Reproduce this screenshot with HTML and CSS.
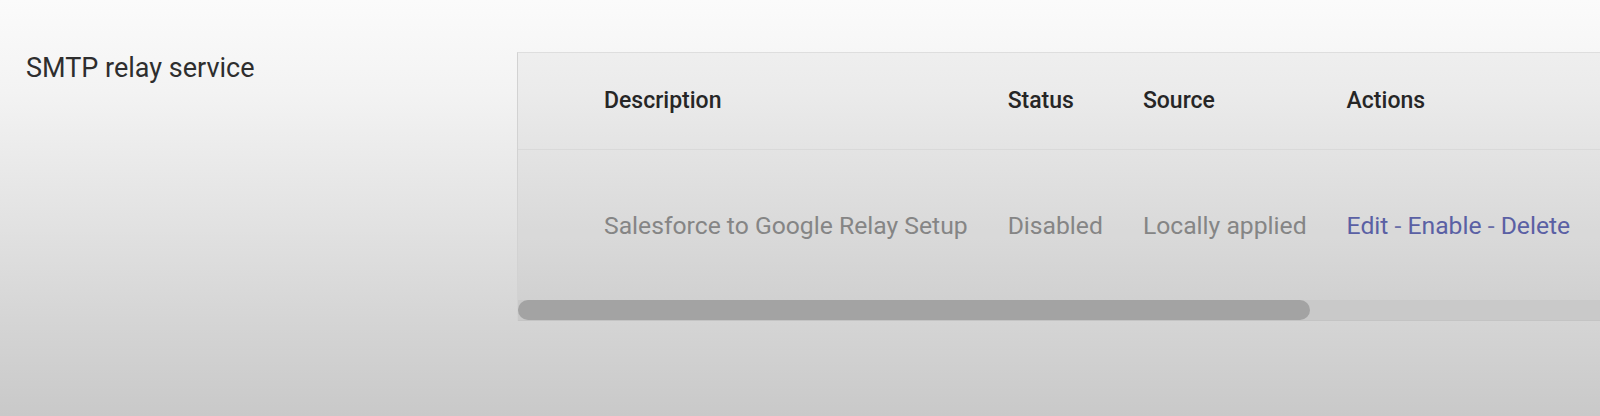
FILE: index.html
```html
<!DOCTYPE html>
<html lang="en">
<head>
    <meta charset="UTF-8">
    <meta name="viewport" content="width=device-width, initial-scale=1.0">
    <title>SMTP relay service</title>
    <link rel="stylesheet" href="styles.css">
</head>
<body>
    <div class="setting-row">
        <!-- Setting name on the left -->
        <div class="setting-label">SMTP relay service</div>

        <!-- Relay rules table -->
        <div class="relay-table">
            <table>
                <thead>
                    <tr>
                        <th class="spacer"></th>
                        <th>Description</th>
                        <th>Status</th>
                        <th>Source</th>
                        <th>Actions</th>
                        <th class="fill"></th>
                    </tr>
                </thead>
                <tbody>
                    <tr>
                        <td class="spacer"></td>
                        <td>Salesforce to Google Relay Setup</td>
                        <td>Disabled</td>
                        <td>Locally applied</td>
                        <td class="actions"><a href="#">Edit</a> - <a href="#">Enable</a> - <a href="#">Delete</a></td>
                        <td class="fill"></td>
                    </tr>
                </tbody>
            </table>
            <div class="scroll-track"><div class="scroll-thumb"></div></div>
        </div>
    </div>
</body>
</html>
```

FILE: styles.css
```css
html, body {
    height: 100%;
}
body {
    margin: 0;
    overflow: hidden;
    font-family: Roboto, "Liberation Sans", Arial, sans-serif;
    background: linear-gradient(#fbfbfb 0%, #f3f3f3 22%, #e4e4e4 50%, #d6d6d6 75%, #c9c9c9 100%);
}
.setting-row {
    display: flex;
    padding-top: 52px;
}
.setting-label {
    flex-shrink: 0;
    width: 491px;
    padding-left: 26px;
    font-size: 27px;
    line-height: 32px;
    color: #2e2e2e;
}
.relay-table {
    flex-shrink: 0;
    width: 1400px;
    border-left: 1px solid #d2d2d2;
    border-top: 1px solid #dedede;
    background-color: rgba(0, 0, 0, 0.03);
}
table {
    border-collapse: collapse;
    white-space: nowrap;
}
th, td {
    padding: 0 20px;
    text-align: left;
    vertical-align: middle;
}
th {
    height: 96px;
    box-sizing: border-box;
    font-size: 23px;
    font-weight: 500;
    color: #262626;
    border-bottom: 1px solid #d9d9d9;
}
td {
    height: 151px;
    padding-top: 1px;
    box-sizing: border-box;
    font-size: 24.7px;
    color: #858585;
}
.spacer {
    width: 66px;
    min-width: 66px;
    padding: 0;
}
.fill {
    width: 300px;
}
.actions a {
    color: #5a60a4;
    text-decoration: none;
}
.actions {
    color: #6a6fa8;
}
.scroll-track {
    height: 20px;
    background-color: #c9c9c9;
    border-bottom: 1px solid #c4c4c4;
}
.scroll-thumb {
    width: 792px;
    height: 100%;
    border-radius: 10px;
    background-color: #a3a3a3;
}
```
